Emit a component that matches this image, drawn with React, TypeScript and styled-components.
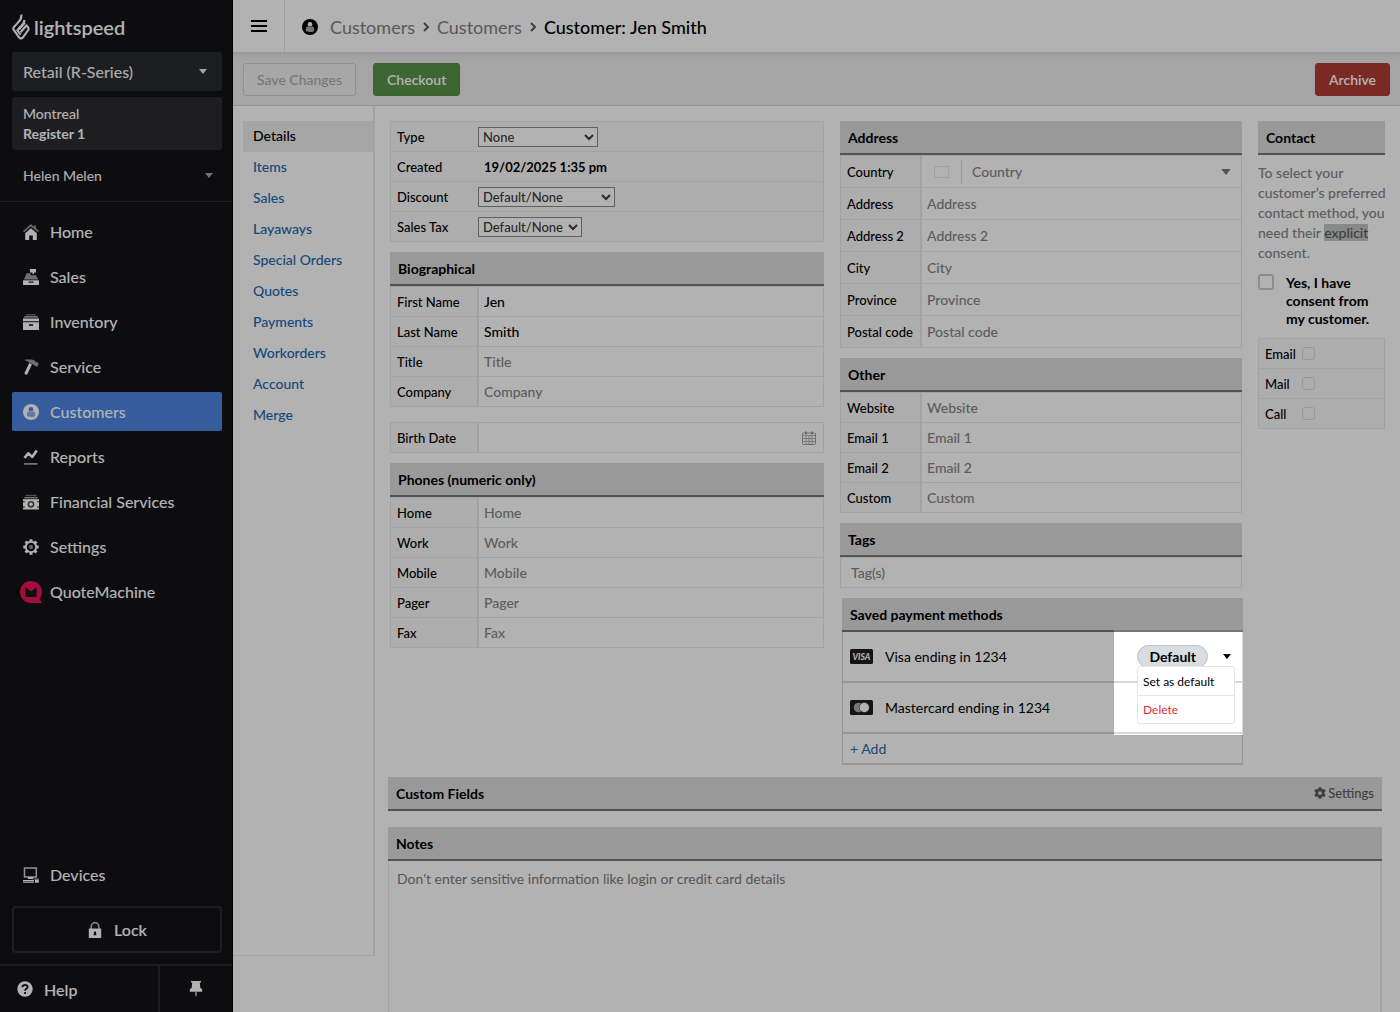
import React from 'react';
import styled, { createGlobalStyle, css } from 'styled-components';
import { FaCog } from 'react-icons/fa';

const color = {
  night: '#131418',
  nightLine: '#2a2c32',
  line: '#e8e8e8',
  label: '#f8f8f8',
  head: '#dbdbdb',
  headLine: '#777777',
  hint: '#868686',
  link: '#1e69ae',
};

const GlobalStyle = createGlobalStyle`
  *, *::before, *::after { box-sizing: border-box; }
  body { margin: 0; background: #ffffff; }
  body, button, input, select, textarea { font-family: Lato, "Open Sans", sans-serif; }
  button { cursor: pointer; }
  a { text-decoration: none; }
`;

const App = styled.div`
  display: flex;
  height: 100vh;
  overflow: hidden;
  font-size: 14px;
  color: #000000;
  background: #ffffff;
`;

/* ---------- sidebar ---------- */

const Sidebar = styled.aside`
  display: flex;
  flex-direction: column;
  flex: none;
  width: 233px;
  background: ${color.night};
  border-right: 1px solid #000000;
  color: #ffffff;
`;

const Brand = styled.a`
  display: flex;
  align-items: center;
  gap: 4px;
  height: 52px;
  padding: 2px 12px 0;
  color: #ffffff;
  font-size: 20px;
  font-weight: 600;
`;

const Switchers = styled.div`
  display: flex;
  flex-direction: column;
  gap: 6px;
  padding: 0 10px 6px 12px;
  border-bottom: 1px solid ${color.nightLine};
`;

const Switcher = styled.button<{ $plain?: boolean }>`
  display: flex;
  align-items: center;
  justify-content: space-between;
  height: 39px;
  padding: 0 ${p => (p.$plain ? 9 : 15)}px 0 11px;
  border: 0;
  border-radius: 3px;
  background: ${p => (p.$plain ? 'transparent' : '#2a2c31')};
  color: ${p => (p.$plain ? '#a0a0a0' : '#e8e8e8')};
  font-size: ${p => (p.$plain ? 14 : 16)}px;
  font-weight: 500;

  span { color: #f4f4f4; }
`;

const Register = styled.div`
  display: flex;
  flex-direction: column;
  justify-content: center;
  height: 53px;
  padding: 0 11px;
  border-radius: 3px;
  background: #2b2c2e;
  font-size: 14px;
  font-weight: 500;
  line-height: 20px;

  strong { font-weight: 700; }
`;

const Nav = styled.nav<{ $bottom?: boolean }>`
  display: flex;
  flex-direction: column;
  gap: 6px;
  padding: 10px 10px 0 12px;
  ${p => p.$bottom && css`margin-top: auto; padding-bottom: 12px;`}
`;

const NavLink = styled.a<{ $active?: boolean }>`
  display: flex;
  align-items: center;
  gap: 11px;
  height: 39px;
  padding: 0 11px;
  border-radius: 2px;
  background: ${p => (p.$active ? '#4d86e2' : 'transparent')};
  color: #ffffff;
  font-size: 16px;
  font-weight: 500;
`;

const NavIcon = styled.span`
  display: flex;
  justify-content: center;
  flex: none;
  width: 16px;

  svg { flex: none; }
`;

const LockButton = styled.button`
  display: flex;
  align-items: center;
  justify-content: center;
  gap: 11px;
  height: 47px;
  margin: 0 10px 11px 12px;
  border: 2px solid ${color.nightLine};
  border-radius: 4px;
  background: transparent;
  color: #ffffff;
  font-size: 16px;
  font-weight: 600;
`;

const SideFooter = styled.div`
  display: flex;
  height: 48px;
  border-top: 2px solid ${color.nightLine};
`;

const FooterButton = styled.button<{ $pin?: boolean }>`
  display: flex;
  align-items: center;
  gap: 11px;
  padding: 0 17px;
  border: 0;
  background: transparent;
  color: #ffffff;
  font-size: 16px;
  font-weight: 600;
  ${p => p.$pin
    ? css`width: 74px; justify-content: center; border-left: 2px solid ${color.nightLine};`
    : css`flex: 1;`}
`;

/* ---------- page frame ---------- */

const Main = styled.main`
  display: flex;
  flex-direction: column;
  flex: 1;
  min-width: 0;
`;

const TopBar = styled.header`
  display: flex;
  align-items: center;
  flex: none;
  height: 53px;
  border-bottom: 1px solid #dcdcdc;
`;

const MenuButton = styled.button`
  display: flex;
  align-items: center;
  justify-content: center;
  align-self: stretch;
  width: 52px;
  border: 0;
  border-right: 1px solid #e6e6e6;
  background: transparent;
`;

const Crumbs = styled.nav`
  display: flex;
  align-items: center;
  gap: 7px;
  padding: 2px 17px 0;
  font-size: 18px;
  font-weight: 500;

  a { color: #808285; font-weight: 400; }
  a:first-of-type { margin-left: 5px; }
`;

const ActionBar = styled.div`
  display: flex;
  align-items: center;
  gap: 17px;
  flex: none;
  height: 53px;
  padding: 0 10px;
  border-bottom: 1px solid #d2d2d2;
  background: linear-gradient(#e2e2e2, #ececec 8px);
`;

const ActionButton = styled.button<{ $tone?: 'go' | 'stop' }>`
  height: 33px;
  padding: 0 13px;
  border: 1px solid #cfcfcf;
  border-radius: 3px;
  background: #f0f0f0;
  color: #acacac;
  font-size: 14px;
  font-weight: 500;
  ${p => p.$tone && css`
    border-color: ${p.$tone === 'go' ? '#568a47' : '#ab3a35'};
    background: ${p.$tone === 'go' ? '#5a924a' : '#b03c36'};
    color: #ffffff;
    font-weight: 600;
  `}
  ${p => p.$tone === 'stop' && css`margin-left: auto;`}
`;

const Body = styled.div`
  display: flex;
  flex: 1;
  min-height: 0;
`;

const Tabs = styled.nav`
  display: flex;
  flex-direction: column;
  align-self: flex-start;
  flex: none;
  width: 142px;
  min-height: 850px;
  padding: 15px 0 0 10px;
  border-right: 2px solid ${color.line};
  border-bottom: 1px solid ${color.line};
`;

const Tab = styled.a<{ $active?: boolean }>`
  height: 31px;
  padding-left: 10px;
  background: ${p => (p.$active ? '#ececec' : 'transparent')};
  color: ${p => (p.$active ? '#000000' : color.link)};
  font-size: 14px;
  font-weight: 500;
  line-height: 30px;
`;

const Content = styled.div`
  display: flex;
  flex-direction: column;
  flex: 1;
  min-width: 0;
  padding-top: 15px;
`;

const Columns = styled.div`
  display: grid;
  grid-template-columns: 434fr 402fr 127fr;
  align-items: start;
  gap: 16px;
  padding: 0 15px;
`;

const Column = styled.div`
  display: flex;
  flex-direction: column;
  gap: 10px;
  min-width: 0;
`;

/* ---------- form parts ---------- */

const SectionTitle = styled.h2`
  display: flex;
  align-items: center;
  justify-content: space-between;
  height: 34px;
  margin: 0;
  padding: 0 8px;
  border-bottom: 2px solid ${color.headLine};
  background: ${color.head};
  font-size: 14px;
  font-weight: 700;
`;

const Rows = styled.div<{ $spaced?: boolean }>`
  border: 1px solid ${color.line};
  border-bottom: 0;
  ${p => p.$spaced && css`margin-top: 5px;`}
`;

const Row = styled.div<{ $height?: number; $label?: number; $flat?: boolean }>`
  display: grid;
  grid-template-columns: ${p => p.$label || 88}px 1fr;
  height: ${p => p.$height || 30}px;
  border-bottom: 1px solid ${color.line};
  ${p => p.$flat && css`background: ${color.label};`}
`;

const RowLabel = styled.label<{ $flat?: boolean }>`
  display: flex;
  align-items: center;
  padding-left: 6px;
  background: ${color.label};
  font-size: 13px;
  font-weight: 500;
  ${p => !p.$flat && css`border-right: 2px solid ${color.line};`}
`;

const TextInput = styled.input`
  flex: 1;
  width: 100%;
  min-width: 0;
  padding: 0 5px;
  border: 0;
  outline: 0;
  background: transparent;
  color: #000000;
  font-size: 14px;
  font-weight: 500;

  &::placeholder { color: ${color.hint}; opacity: 1; }
`;

const Field = styled.div`
  display: flex;
  align-items: center;
  min-width: 0;
`;

const Select = styled.select<{ $width: number }>`
  width: ${p => p.$width}px;
  height: 20px;
  padding: 0;
  border: 1px solid #8a8a8a;
  border-radius: 0;
  background-color: #ffffff;
  color: #3c3c3c;
  font-size: 13px;
  font-weight: 500;
`;

const Stamp = styled.strong`
  padding-left: 6px;
  font-size: 13px;
`;

const IconButton = styled.button`
  display: flex;
  padding: 0 7px;
  border: 0;
  background: transparent;
`;

const Flag = styled.span`
  width: 15px;
  height: 12px;
  margin: 0 12px;
  border: 1px solid ${color.line};
`;

const CountrySelect = styled.select`
  flex: 1;
  height: 24px;
  padding: 0 10px;
  border: 0;
  border-left: 1px solid #dadada;
  appearance: none;
  background: transparent;
  color: ${color.hint};
  font-size: 14px;
  font-weight: 500;
`;

const CaretSlot = styled.span`
  display: flex;
  padding-right: 10px;
  color: #777777;
`;

const TagBox = styled.div`
  display: flex;
  height: 31px;
  padding-left: 5px;
  border: 1px solid ${color.line};
`;

/* ---------- payment methods ---------- */

const PaymentCard = styled.section`
  position: relative;
  margin: 0 -1px 0 2px;
`;

const PaymentRow = styled.div<{ $last?: boolean }>`
  position: relative;
  display: flex;
  align-items: center;
  height: ${p => (p.$last ? 31 : 51)}px;
  padding: 0 9px 0 7px;
  border: 1px solid #d8d8d8;
  border-top: 0;
  border-bottom-width: 2px;
`;

const PaymentName = styled.span`
  margin: 0 auto 0 12px;
  font-size: 14px;
`;

const AddLink = styled.a`
  color: ${color.link};
  font-size: 14px;
`;

const Badge = styled.span`
  height: 23px;
  padding: 0 11px;
  border: 1px solid #bcc4ca;
  border-radius: 12px;
  background: #d7dde1;
  font-size: 14px;
  font-weight: 700;
  line-height: 22px;
`;

const MoreButton = styled.button`
  display: flex;
  margin-left: 13px;
  padding: 2px;
  border: 0;
  background: transparent;
`;

const Menu = styled.div`
  position: absolute;
  z-index: 2;
  top: 34px;
  right: 7px;
  display: flex;
  flex-direction: column;
  width: 98px;
  border: 1px solid #e6e6e6;
  border-radius: 3px;
  background: #ffffff;
`;

const MenuItem = styled.button<{ $danger?: boolean }>`
  height: 28px;
  padding: 0 5px;
  border: 0;
  background: transparent;
  color: ${p => (p.$danger ? '#e22840' : '#000000')};
  font-size: 12px;
  text-align: left;

  & + & { border-top: 1px solid #e6e6e6; }
`;

/* Dims the whole page except the open menu. */
const Spotlight = styled.div`
  position: absolute;
  z-index: 5;
  top: 32px;
  right: 0;
  width: 129px;
  height: 105px;
  box-shadow: 0 0 0 2400px rgba(0, 0, 0, 0.3);
  pointer-events: none;
`;

/* ---------- contact ---------- */

const ContactNote = styled.p`
  margin: -2px -6px 0 0;
  color: #85878a;
  font-size: 14px;
  font-weight: 500;
  line-height: 20px;

  mark { background: #c4c4c4; color: #5a5a5a; }
`;

const Consent = styled.label`
  display: flex;
  gap: 12px;
  margin-top: 1px;
  font-size: 14px;
  font-weight: 700;
  line-height: 18px;
`;

const Check = styled.input<{ $large?: boolean }>`
  appearance: none;
  flex: none;
  width: ${p => (p.$large ? 16 : 13)}px;
  height: ${p => (p.$large ? 16 : 13)}px;
  margin: 0;
  border: ${p => (p.$large ? '2px solid #cccccc' : '1px solid #dadada')};
  border-radius: 3px;
  background: ${p => (p.$large ? '#ffffff' : color.label)};
`;

/* ---------- lower sections ---------- */

const Wide = styled.div`
  display: flex;
  flex-direction: column;
  flex: 1;
  gap: 16px;
  min-height: 0;
  padding: 12px 18px 0 13px;
`;

const SettingsLink = styled.a`
  display: flex;
  align-items: center;
  gap: 2px;
  color: #5c5c5c;
  font-size: 13px;
  font-weight: 500;
`;

const NotesSection = styled.section`
  display: flex;
  flex-direction: column;
  flex: 1;
`;

const NotesBox = styled.textarea`
  flex: 1;
  padding: 9px 8px;
  border: 1px solid ${color.line};
  border-width: 0 2px 0 1px;
  outline: 0;
  resize: none;
  background: transparent;
  font-size: 14px;
  line-height: 18px;

  &::placeholder { color: #7c7c7c; opacity: 1; }
`;

/* ---------- icons ---------- */

const Caret = ({ size = 8 }: { size?: number }) => (
  <svg width={size} height={size / 2 + 1} viewBox="0 0 8 5" fill="currentColor" aria-hidden="true"><path d="M0 0h8L4 5z" /></svg>
);

const Svg = ({ children, size = 16 }: { children: React.ReactNode; size?: number }) => (
  <svg width={size} height={size} viewBox="0 0 16 16" fill="currentColor" aria-hidden="true">{children}</svg>
);

const FlameLogo = () => (
  <svg width="18" height="26" viewBox="0 0 18 26" fill="none" stroke="currentColor" strokeWidth="2.100" strokeLinejoin="round" aria-hidden="true">
    <path d="M9.300 .5C9.800 4 8.300 6.300 6 8.600L1.700 13.300Q.9 14.400 1.600 15.600L7 23.300Q9 25.600 11 23.300L16.300 16Q17 14.800 16.200 13.600L14.600 11.300L8.600 18.300" />
    <path d="M12.400 6C12.400 8 11.600 9.400 10.300 10.800L5.300 16.300L8.700 20.600" />
    <path d="M9 12.300L5.300 16.300M13.200 8.800L7.200 15.800" strokeWidth="1.500" />
  </svg>
);
const HomeIcon = () => (
  <Svg><path opacity=".55" d="M8 0 0 7l1.2 1.3L8 2.5l6.800 5.800L16 7l-3-2.600V1.500h-2v1.200z" /><path d="M8 4.200 2.200 9.200V16H6.200v-4.500h3.600V16h4V9.200z" /></Svg>
);
const SalesIcon = () => (
  <Svg><path d="M7 0h6v3.600h-2v1.400H9.500V3.600H7z" /><path opacity=".6" d="M3.500 4.200h4v2h5.500l2.200 4.300H1z" /><path d="M0 11.300h16V16H0z" /><path d="M5.500 12.500h5v1.200h-5z" fill={color.night} /></Svg>
);
const InventoryIcon = () => (
  <Svg><path opacity=".35" d="M3 0h10v1.500H3z" /><path opacity=".6" d="M1.500 2h13l1 1.800H.5z" /><path d="M0 4.500h16v2.800H0zM0 8.200h16V16H0z" /><path d="M6 10.200h4v1.600H6z" fill={color.night} /></Svg>
);
const ServiceIcon = () => (
  <Svg><path opacity=".6" d="M2 .5h6c2.500 0 4 1.200 5 2.800l2.700.5-1.200 3.800-2-.3L9.500 5 6.200 3.500C5 2.200 3.500 1.600 2 1.500z" /><path d="M6.200 4 9 5.300 4.300 15.200c-.5 1-3.200.2-2.800-1.200z" /></Svg>
);
const PersonIcon = ({ hole }: { hole: string }) => (
  <Svg><circle cx="8" cy="8" r="8" /><circle cx="8" cy="5.300" r="2.300" fill={hole} /><path fill={hole} opacity=".65" d="M3.800 12V9.800C3.800 8 5.300 7.400 6.200 7.200c1 .9 2.600.9 3.600 0 1 .2 2.400.8 2.400 2.600V12c-2 1.600-6.400 1.600-8.400 0z" /></Svg>
);
const ReportsIcon = () => (
  <Svg><path d="M1.500 8.800 5.200 4.300l4 3.600L13.800 1.500" fill="none" stroke="currentColor" strokeWidth="2.600" strokeLinejoin="round" /><path opacity=".6" d="M1 14h13.500v1.800H1z" /></Svg>
);
const FinanceIcon = () => (
  <Svg><path opacity=".4" d="M2.500.8h11v1.400h-11z" /><path opacity=".6" d="M1.200 3h13.600v1.500H1.200z" /><path d="M0 5.200h16V15.500H0z" /><circle cx="8" cy="10.300" r="3.400" fill={color.night} opacity=".75" /><circle cx="8" cy="10.300" r="1.700" /><path d="M0 7.300h1.800v1H0zM14.200 7.300H16v1h-1.800zM0 12.500h1.800v1H0zM14.200 12.500H16v1h-1.800z" fill={color.night} /></Svg>
);
const GearIcon = () => (
  <Svg>
    <g stroke="currentColor" strokeWidth="3">{[0, 45, 90, 135].map(a => <path key={a} d="M8 .3v2.700M8 13v2.700" transform={`rotate(${a} 8 8)`} />)}</g>
    <circle cx="8" cy="8" r="5.200" fill="none" stroke="currentColor" strokeWidth="1.900" /><circle cx="8" cy="8" r="1.900" opacity=".6" />
  </Svg>
);
const QuoteIcon = () => (
  <svg width="22" height="22" viewBox="0 0 22 22" aria-hidden="true"><path fill="#e8125a" d="M11 0a11 11 0 1 0 0 22h11l-2.400-4.200A11 11 0 0 0 11 0z" /><path fill={color.night} d="M5.500 6 11 10.500l5.500-4.500v10h-11z" /></svg>
);
const DevicesIcon = () => (
  <Svg><path d="M1.500 1h11.800v9H1.500z" fill="none" stroke="currentColor" strokeWidth="1.500" opacity=".8" /><path d="M5 10h5v2H5zM0 13h11v1H0zM0 14.600h11v1.200H0zM12 12.600h3.800v3.200H12z" /><path d="M10 11.500h6v1h-6z" opacity=".6" /></Svg>
);
const LockIcon = () => (
  <Svg><path d="M4.200 7V4.500a3.800 3.800 0 0 1 7.600 0V7" fill="none" stroke="currentColor" strokeWidth="1.700" opacity=".7" /><path d="M1.800 6.500h12.400V16H1.800z" /><path d="M7.200 9.500h1.600l.6 3.800H6.600z" fill={color.night} /></Svg>
);
const HelpIcon = () => (
  <Svg><circle cx="8" cy="8" r="7.700" /><path d="M5.400 6.300C5.500 3 10.700 3.200 10.600 6c0 1.900-2.500 1.800-2.500 3.700M8.100 11v2" fill="none" stroke={color.night} strokeWidth="1.900" /></Svg>
);
const PinIcon = () => (
  <Svg><path d="M3 0h10v1.600h-1.200l.5 5.200 1.900 1.500v2.400H1.800V8.300l1.900-1.500.5-5.200H3z" /><path opacity=".6" d="M7 10.700h2V14l-1 2-1-2z" /></Svg>
);
const BurgerIcon = () => (
  <Svg><path d="M0 2h16v2H0zM0 7h16v2H0zM0 12h16v2H0z" /></Svg>
);
const Chevron = () => (
  <svg width="8" height="10" viewBox="0 0 8 10" fill="none" stroke="#5a5a5a" strokeWidth="2" aria-hidden="true"><path d="m2 1 4 4-4 4" /></svg>
);
const CalendarIcon = () => (
  <svg width="14" height="14" viewBox="0 0 14 14" fill="none" stroke="#a0a0a0" aria-hidden="true"><rect x=".5" y="2" width="13" height="11.500" rx="1" /><path d="M.5 4.500h13M.5 7.500h13M.5 10.500h13M4 4.500v9M7 4.500v9M10 4.500v9" strokeWidth=".8" /><path d="M4 .5v3M10 .5v3" strokeWidth="2" /></svg>
);
const VisaIcon = () => (
  <svg width="23" height="15" viewBox="0 0 23 15" role="img" aria-label="Visa"><rect width="23" height="15" rx="1.500" fill="#1d1e22" /><text x="11.500" y="10.600" textAnchor="middle" fontFamily="Lato, sans-serif" fontWeight="900" fontStyle="italic" fontSize="8.500" fill="#ffffff">VISA</text></svg>
);
const MastercardIcon = () => (
  <svg width="23" height="15" viewBox="0 0 23 15" role="img" aria-label="Mastercard"><rect width="23" height="15" rx="1.500" fill="#1d1e22" /><circle cx="8.500" cy="7.500" r="4.800" fill="#a8a8a8" /><circle cx="14.300" cy="7.500" r="5" fill="#ffffff" stroke="#1d1e22" strokeWidth=".5" /></svg>
);

/* ---------- page ---------- */

const navItems: [string, React.ReactNode][] = [
  ['Home', <HomeIcon />],
  ['Sales', <SalesIcon />],
  ['Inventory', <InventoryIcon />],
  ['Service', <ServiceIcon />],
  ['Customers', <PersonIcon hole="#4d86e2" />],
  ['Reports', <ReportsIcon />],
  ['Financial Services', <FinanceIcon />],
  ['Settings', <GearIcon />],
  ['QuoteMachine', <QuoteIcon />],
];

const tabs = ['Details', 'Items', 'Sales', 'Layaways', 'Special Orders', 'Quotes', 'Payments', 'Workorders', 'Account', 'Merge'];

type FieldRowProps = { id: string; label: string; value?: string; height?: number; labelWidth?: number };

const FieldRow = ({ id, label, value, height, labelWidth }: FieldRowProps) => (
  <Row $height={height} $label={labelWidth}>
    <RowLabel htmlFor={id}>{label}</RowLabel>
    <TextInput id={id} placeholder={label} defaultValue={value} />
  </Row>
);

const SelectRow = ({ id, label, value, width }: { id: string; label: string; value: string; width: number }) => (
  <Row $flat $label={87}>
    <RowLabel $flat htmlFor={id}>{label}</RowLabel>
    <Field><Select id={id} $width={width}><option>{value}</option></Select></Field>
  </Row>
);

export default function CustomerPage() {
  return (
    <App>
      <GlobalStyle />
      <Sidebar>
        <Brand href="#"><FlameLogo />lightspeed</Brand>
        <Switchers>
          <Switcher><span>Retail (R-Series)</span><Caret /></Switcher>
          <Register>Montreal<strong>Register 1</strong></Register>
          <Switcher $plain><span>Helen Melen</span><Caret /></Switcher>
        </Switchers>
        <Nav>
          {navItems.map(([name, icon]) => (
            <NavLink key={name} href="#" $active={name === 'Customers'}><NavIcon>{icon}</NavIcon>{name}</NavLink>
          ))}
        </Nav>
        <Nav $bottom>
          <NavLink href="#"><NavIcon><DevicesIcon /></NavIcon>Devices</NavLink>
        </Nav>
        <LockButton><LockIcon />Lock</LockButton>
        <SideFooter>
          <FooterButton><HelpIcon />Help</FooterButton>
          <FooterButton $pin aria-label="Pin menu"><PinIcon /></FooterButton>
        </SideFooter>
      </Sidebar>

      <Main>
        <TopBar>
          <MenuButton aria-label="Menu"><BurgerIcon /></MenuButton>
          <Crumbs>
            <PersonIcon hole="#ffffff" />
            <a href="#">Customers</a><Chevron />
            <a href="#">Customers</a><Chevron />
            <span>Customer: Jen Smith</span>
          </Crumbs>
        </TopBar>
        <ActionBar>
          <ActionButton disabled>Save Changes</ActionButton>
          <ActionButton $tone="go">Checkout</ActionButton>
          <ActionButton $tone="stop">Archive</ActionButton>
        </ActionBar>
        <Body>
          <Tabs>{tabs.map(t => <Tab key={t} href="#" $active={t === 'Details'}>{t}</Tab>)}</Tabs>
          <Content>
            <Columns>
              <Column>
                <Rows>
                  <SelectRow id="type" label="Type" value="None" width={120} />
                  <Row $flat $label={87}><RowLabel $flat as="span">Created</RowLabel><Field><Stamp>19/02/2025 1:35 pm</Stamp></Field></Row>
                  <SelectRow id="discount" label="Discount" value="Default/None" width={137} />
                  <SelectRow id="tax" label="Sales Tax" value="Default/None" width={104} />
                </Rows>
                <section>
                  <SectionTitle>Biographical</SectionTitle>
                  <Rows>
                    <FieldRow id="first" label="First Name" value="Jen" />
                    <FieldRow id="last" label="Last Name" value="Smith" />
                    <FieldRow id="title" label="Title" />
                    <FieldRow id="company" label="Company" />
                  </Rows>
                </section>
                <Rows $spaced>
                  <Row>
                    <RowLabel htmlFor="birth">Birth Date</RowLabel>
                    <Field><TextInput id="birth" /><IconButton aria-label="Pick a date"><CalendarIcon /></IconButton></Field>
                  </Row>
                </Rows>
                <section>
                  <SectionTitle>Phones (numeric only)</SectionTitle>
                  <Rows>
                    {['Home', 'Work', 'Mobile', 'Pager', 'Fax'].map(l => <FieldRow key={l} id={`phone-${l}`} label={l} />)}
                  </Rows>
                </section>
              </Column>

              <Column>
                <section>
                  <SectionTitle>Address</SectionTitle>
                  <Rows>
                    <Row $height={32} $label={81}>
                      <RowLabel htmlFor="country">Country</RowLabel>
                      <Field>
                        <Flag />
                        <CountrySelect id="country"><option>Country</option></CountrySelect>
                        <CaretSlot><Caret size={10} /></CaretSlot>
                      </Field>
                    </Row>
                    {['Address', 'Address 2', 'City', 'Province', 'Postal code'].map(l => (
                      <FieldRow key={l} id={`address-${l}`} label={l} height={32} labelWidth={81} />
                    ))}
                  </Rows>
                </section>
                <section>
                  <SectionTitle>Other</SectionTitle>
                  <Rows>
                    {['Website', 'Email 1', 'Email 2', 'Custom'].map(l => (
                      <FieldRow key={l} id={`other-${l}`} label={l} labelWidth={81} />
                    ))}
                  </Rows>
                </section>
                <section>
                  <SectionTitle>Tags</SectionTitle>
                  <TagBox><TextInput aria-label="Tags" placeholder="Tag(s)" /></TagBox>
                </section>
                <PaymentCard>
                  <SectionTitle>Saved payment methods</SectionTitle>
                  <PaymentRow>
                    <VisaIcon />
                    <PaymentName>Visa ending in 1234</PaymentName>
                    <Badge>Default</Badge>
                    <MoreButton aria-label="Card actions"><Caret /></MoreButton>
                    <Menu>
                      <MenuItem>Set as default</MenuItem>
                      <MenuItem $danger>Delete</MenuItem>
                    </Menu>
                  </PaymentRow>
                  <PaymentRow>
                    <MastercardIcon />
                    <PaymentName>Mastercard ending in 1234</PaymentName>
                  </PaymentRow>
                  <PaymentRow $last><AddLink href="#">+ Add</AddLink></PaymentRow>
                  <Spotlight />
                </PaymentCard>
              </Column>

              <Column>
                <SectionTitle>Contact</SectionTitle>
                <ContactNote>
                  {'To select your customer’s preferred contact method, you '}
                  {'need their '}
                  <mark>explicit</mark>
                  {' consent.'}
                </ContactNote>
                <Consent><Check type="checkbox" $large />Yes, I have consent from my customer.</Consent>
                <Rows>
                  {['Email', 'Mail', 'Call'].map(l => (
                    <Row key={l} $label={43} $flat>
                      <RowLabel $flat htmlFor={`via-${l}`}>{l}</RowLabel>
                      <Field><Check type="checkbox" id={`via-${l}`} /></Field>
                    </Row>
                  ))}
                </Rows>
              </Column>
            </Columns>

            <Wide>
              <SectionTitle>Custom Fields<SettingsLink href="#"><FaCog size={12} aria-hidden="true" />Settings</SettingsLink></SectionTitle>
              <NotesSection>
                <SectionTitle as="label" htmlFor="notes">Notes</SectionTitle>
                <NotesBox id="notes" placeholder="Don't enter sensitive information like login or credit card details" />
              </NotesSection>
            </Wide>
          </Content>
        </Body>
      </Main>
    </App>
  );
}
